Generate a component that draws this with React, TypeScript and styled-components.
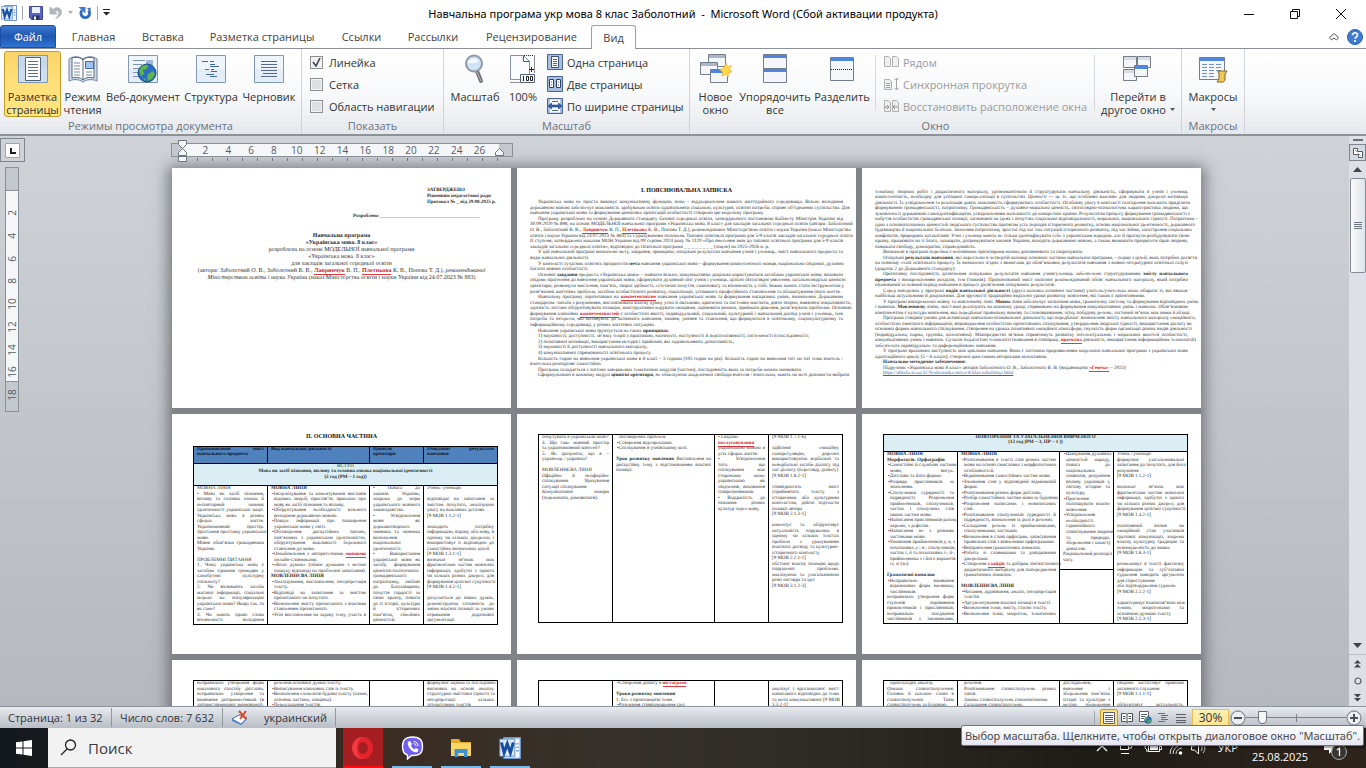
import React from "react";
import styled, { createGlobalStyle, css } from "styled-components";

const GlobalStyle = createGlobalStyle`
  * { box-sizing: border-box; }
  html, body { margin: 0; padding: 0; }
  body { font-family: "Open Sans", "Noto Sans", sans-serif; font-size: 11px; color: #333; }
  button, input { font: inherit; color: inherit; margin: 0; padding: 0; border: 0; background: none; }
  button { white-space: nowrap; }
  svg { display: block; flex: none; }
`;

/* ---------- shell ---------- */

const Shell = styled.div`
  position: relative;
  display: flex;
  flex-direction: column;
  height: 100vh;
  overflow: hidden;
  background: #fff;
`;

const TitleBar = styled.header`
  display: grid;
  grid-template-columns: 1fr auto 1fr;
  align-items: center;
  height: 25px;
  flex: none;
`;

const QuickAccess = styled.div`
  display: flex;
  align-items: center;
  height: 22px;
  padding-left: 1px;
  gap: 5px;
`;

const IconButton = styled.button`
  display: flex;
  align-items: center;
  justify-content: center;
`;

const ThinRule = styled.span`
  width: 1px;
  height: 14px;
  background: #a5a9ae;
`;

const WindowTitle = styled.h1`
  margin: 2px 0 0;
  font-family: "Noto Sans", sans-serif;
  font-size: 11px;
  line-height: 20px;
  font-weight: 400;
  color: #000;
  white-space: pre;
`;

const WindowButtons = styled.div`
  display: flex;
  justify-content: flex-end;
  padding: 3px 2px 0 0;
`;

const WindowButton = styled(IconButton)`
  width: 46px;
  height: 22px;
`;

const TabRow = styled.nav`
  display: flex;
  height: 24px;
  flex: none;
  border-bottom: 1px solid #8b9097;
`;

const Tab = styled.button<{ $w: number; $kind?: "file" | "active" }>`
  width: ${(p) => p.$w}px;
  height: 23px;
  line-height: 22px;
  text-align: center;
  color: #444;
  ${(p) =>
    p.$kind === "file" &&
    css`
      color: #fff;
      border: 1px solid #1b4fa3;
      border-radius: 3px 3px 0 0;
      background: linear-gradient(#3b78cf, #1f56b1 50%, #2f74d4);
    `}
  ${(p) =>
    p.$kind === "active" &&
    css`
      height: 24px;
      border: 1px solid #9a9fa6;
      border-bottom: 0;
      border-radius: 3px 3px 0 0;
      background: #fff;
    `}
`;

const TabTools = styled.div`
  display: flex;
  align-items: center;
  gap: 8px;
  margin-left: auto;
  padding-right: 3px;
`;

/* ---------- ribbon ---------- */

const Ribbon = styled.section`
  display: flex;
  height: 87px;
  flex: none;
  background: linear-gradient(#fff, #f7f8f9 55%, #e5e8ec);
  border-bottom: 2px solid #8d9298;
`;

const Group = styled.div<{ $w: number }>`
  display: flex;
  flex-direction: column;
  width: ${(p) => p.$w}px;
  border-right: 1px solid #d0d4d9;
`;

const GroupBody = styled.div<{ $pad?: number }>`
  display: flex;
  height: 69px;
  padding: 2px 0 0 ${(p) => p.$pad ?? 4}px;
`;

const GroupTitle = styled.div`
  line-height: 16px;
  text-align: center;
  color: #6b717b;
`;

const BigButton = styled.button<{ $w: number; $on?: boolean }>`
  display: flex;
  flex-direction: column;
  align-items: center;
  width: ${(p) => p.$w}px;
  height: 66px;
  flex: none;
  border-radius: 3px;
  line-height: 13px;
  border: 1px solid ${(p) => (p.$on ? "#c29b29" : "transparent")};
  ${(p) => p.$on && css`background: linear-gradient(#fbd469, #ffdf7a 50%, #ffe680);`}
`;

const BigIcon = styled.span`
  display: flex;
  align-items: center;
  justify-content: center;
  width: 32px;
  height: 34px;
  margin-bottom: 4px;
`;

const WithCaret = styled.span`
  display: flex;
  align-items: center;
  gap: 4px;
`;

const CaretBelow = styled.span`
  padding-top: 5px;
`;

const Stack = styled.div<{ $ml?: number }>`
  display: flex;
  flex-direction: column;
  margin-left: ${(p) => p.$ml ?? 0}px;
`;

const SmallRow = styled.button<{ $off?: boolean }>`
  display: flex;
  align-items: center;
  gap: 4px;
  height: 22px;
  color: ${(p) => (p.$off ? "#9b9b9b" : "inherit")};
`;

const CheckRow = styled.label`
  display: flex;
  align-items: center;
  gap: 6px;
  height: 22px;
  white-space: nowrap;
`;

const Check = styled.input`
  appearance: none;
  width: 13px;
  height: 13px;
  border: 1px solid #8e8f8f;
  background: #dcdedf;
  box-shadow: inset 0 0 0 1px #f4f4f4;
  &:checked {
    background: #f0f0f0 url("data:image/svg+xml,%3Csvg xmlns='http://www.w3.org/2000/svg' width='11' height='11'%3E%3Cpath d='M2 5l3 4 4-8' fill='none' stroke='%23404552' stroke-width='1.6'/%3E%3C/svg%3E");
  }
`;

const Divider = styled.span<{ $end?: boolean }>`
  width: 1px;
  height: 56px;
  margin: 4px 0 0 ${(p) => (p.$end ? "auto" : "4px")};
  background: #d6d9dd;
`;

/* ---------- workspace ---------- */

const Workspace = styled.main`
  display: flex;
  flex: 1;
  min-height: 0;
  overflow: hidden;
  background: linear-gradient(#cfd3d8, #b5b9be);
`;

const LeftRail = styled.div`
  width: 24px;
  flex: none;
  padding-top: 2px;
`;

const TabStop = styled.button`
  display: flex;
  align-items: center;
  justify-content: center;
  width: 25px;
  height: 24px;
  margin-bottom: 5px;
  border: 1px solid #7f858d;
  background: #cfd3d8;
`;

const RulerBand = styled.div<{ $vertical?: boolean }>`
  display: flex;
  flex-direction: ${(p) => (p.$vertical ? "column" : "row")};
  border: 1px solid #8a9098;
  background: #c3c8cf;
  color: #555b64;
  ${(p) =>
    p.$vertical
      ? css`width: 14px; height: 245px; margin-left: 5px;`
      : css`width: 342px; height: 14px; margin-left: -1px;`}
`;

const RulerWhite = styled.div<{ $vertical?: boolean }>`
  background: #f5f6f8;
  ${(p) =>
    p.$vertical
      ? css`margin-top: 22px; height: 192px; padding-top: 11px; border: solid #8a9098; border-width: 1px 0; writing-mode: vertical-rl;`
      : css`margin-left: 10px; width: 317px; height: 12px; padding-left: 12px;`}
`;

const RulerNumbers = styled.div<{ $vertical?: boolean }>`
  display: flex;
  ${(p) =>
    p.$vertical
      ? css`flex-direction: row; height: 205px; width: 12px;`
      : css`width: 297px; height: 12px;`}
`;

const RulerNumber = styled.span<{ $vertical?: boolean }>`
  flex: 1;
  font-size: 10px;
  line-height: 12px;
  text-align: center;
  ${(p) => p.$vertical && css`writing-mode: vertical-rl; transform: rotate(180deg);`}
`;

const Ticks = styled.div`
  width: 317px;
  height: 3px;
  margin: 1px 0 0 11px;
  background: repeating-linear-gradient(90deg, transparent 0 14px, #6f757d 14px 15px);
`;

const Canvas = styled.div`
  display: flex;
  flex: 1;
  justify-content: center;
  min-width: 0;
`;

const Sheets = styled.div`
  flex: none;
`;

const RulerRow = styled.div`
  position: relative;
  height: 32px;
  padding-top: 7px;
`;

const Marker = styled.span<{ $end?: boolean }>`
  position: absolute;
  top: ${(p) => (p.$end ? 12 : 4)}px;
  left: ${(p) => (p.$end ? 323 : 6)}px;
`;

const PageGrid = styled.div`
  display: grid;
  grid-template-columns: repeat(3, 339px);
  grid-auto-rows: 240px;
  gap: 6px;
  background: #808387;
  box-shadow: 0 2px 14px 4px rgba(60, 64, 70, 0.6);
`;

const Page = styled.article<{ $top: number; $side?: number }>`
  padding: ${(p) => p.$top}px ${(p) => p.$side ?? 21}px 0;
  background: #fff;
  overflow: hidden;
  font-family: "Liberation Serif", serif;
  font-size: 5px;
  line-height: 6px;
  color: #2e2e2e;
  text-rendering: geometricPrecision;
`;

const PageTitle = styled.h2`
  margin: 0 0 6px;
  font-size: 6px;
  line-height: 6px;
  font-weight: 700;
  text-align: center;
  color: #111;
`;

const Lines = styled.div<{ $h: number; $rows: number }>`
  display: grid;
  height: ${(p) => p.$h}px;
  grid-template-columns: minmax(0, 1fr);
  grid-template-rows: repeat(${(p) => p.$rows}, 1fr);
`;

const indents: Record<string, number> = { ">": 8, "-": 3, "•": 1 };

const Line = styled.div<{ $align: "center" | "left" | "justify"; $indent?: string }>`
  min-height: 0;
  height: 5px;
  line-height: 5px;
  white-space: nowrap;
  text-align: ${(p) => p.$align};
  text-align-last: ${(p) => p.$align};
  padding-left: ${(p) => indents[p.$indent ?? ""] ?? 0}px;
`;

const Misspelt = styled.span`
  color: #d0191f;
  font-weight: 700;
  border-bottom: 1px solid #e2383e;
`;

const DocLink = styled.a`
  color: #2b66b1;
`;

const DocTable = styled.table`
  width: 304px;
  table-layout: fixed;
  border-collapse: collapse;
  td, th {
    padding: 0 3px;
    border: 1px solid #000;
    vertical-align: top;
    font-weight: 400;
  }
`;

const HeadCell = styled.th`
  background: #4f81bd;
  color: #0c1626;
`;

const BandCell = styled.td`
  background: #daeef3;
`;

const Approval = styled.div`
  width: 66px;
  margin-left: auto;
  margin-right: -3px;
  white-space: nowrap;
  b { display: block; }
`;

const Author = styled.div`
  margin: 8px 0 13px 160px;
  white-space: nowrap;
`;

const CoverLine = styled.p<{ $strong?: boolean }>`
  margin: 0;
  text-align: center;
  white-space: nowrap;
  font-size: 6px;
  line-height: 7px;
  font-weight: ${(p) => (p.$strong ? 700 : 400)};
`;

const ScrollRail = styled.div`
  display: flex;
  flex-direction: column;
  align-items: center;
  width: 17px;
  flex: none;
  padding-top: 3px;
  background: #dde1e7;
`;

const SplitHandle = styled.span`
  width: 10px;
  height: 2px;
  margin-bottom: 3px;
  background: #6b7078;
`;

const RailBox = styled(IconButton)`
  width: 17px;
  height: 17px;
  border: 1px solid #7f858d;
  background: #d5d9df;
`;

const RailButton = styled(IconButton)`
  width: 17px;
  height: 17px;
`;

const Thumb = styled.div`
  display: flex;
  align-items: center;
  justify-content: center;
  width: 16px;
  height: 95px;
  margin-bottom: auto;
  border: 1px solid #858b94;
  border-radius: 2px;
  background: linear-gradient(90deg, #f8f9fa, #e0e4e9);
`;

const RailFoot = styled.div`
  width: 17px;
  border-top: 1px solid #b9bec5;
`;

/* ---------- status bar ---------- */

const StatusBar = styled.footer`
  display: flex;
  align-items: center;
  height: 22px;
  flex: none;
  border-top: 1px solid #8e949b;
  background: linear-gradient(#e8ebee, #cfd3d9 50%, #b9bfc7);
  color: #30353c;
`;

const StatusItem = styled.button<{ $w: number }>`
  display: flex;
  align-items: center;
  justify-content: space-between;
  width: ${(p) => p.$w}px;
  height: 19px;
  padding: 0 8px;
  border-right: 1px solid #9298a0;
`;

const StatusRight = styled.div`
  display: flex;
  align-items: center;
  height: 20px;
  margin-left: auto;
  padding-right: 4px;
`;

const ViewButton = styled(IconButton)<{ $on?: boolean }>`
  width: 18px;
  height: 18px;
  margin-left: ${(p) => (p.$on ? 5 : 0)}px;
  border: 1px solid ${(p) => (p.$on ? "#c29b29" : "transparent")};
  border-radius: 2px;
  background: ${(p) => (p.$on ? "#ffe07a" : "none")};
`;

const ZoomLevel = styled.button`
  width: 37px;
  height: 18px;
  margin: 0 1px 0 2px;
  font-size: 12px;
  line-height: 16px;
  border: 1px solid #e8c050;
  background: linear-gradient(#fdf0b4, #fbe392);
`;

const ZoomSlider = styled.input`
  appearance: none;
  width: 100px;
  height: 16px;
  background: linear-gradient(#7c828b, #7c828b) center / 100% 1px no-repeat,
    linear-gradient(#7c828b, #7c828b) center / 1px 8px no-repeat;
  &::-webkit-slider-thumb {
    appearance: none;
    width: 9px;
    height: 13px;
    border: 1px solid #6d737b;
    border-radius: 1px 1px 5px 5px;
    background: #f2f4f6;
  }
`;

/* ---------- taskbar ---------- */

const Taskbar = styled.footer`
  display: flex;
  align-items: center;
  height: 40px;
  flex: none;
  background: linear-gradient(90deg, #14191d, #1d1e1f 14%, #3a2d22 28%, #35302a 45%, #2e2a26 60%, #1f1c18 80%, #2f241c);
  color: #fff;
`;

const StartButton = styled(IconButton)`
  width: 48px;
  height: 40px;
`;

const SearchBox = styled.label`
  display: flex;
  align-items: center;
  gap: 11px;
  width: 288px;
  height: 40px;
  padding-left: 12px;
  margin-right: 7px;
  border: 1px solid #a7a7a7;
  border-width: 0 0 1px;
  background: #f2f2f2;
`;

const SearchInput = styled.input`
  width: 200px;
  font-size: 15px;
  line-height: 20px;
  outline: 0;
  &::placeholder { color: #3a3a3a; opacity: 1; }
`;

const AppButton = styled(IconButton)<{ $bg?: string; $line: string }>`
  width: 40px;
  height: 40px;
  margin-right: 9px;
  padding-top: 2px;
  background: ${(p) => p.$bg ?? "none"};
  border-bottom: 2px solid ${(p) => p.$line};
`;

const Tray = styled.div`
  display: flex;
  align-items: center;
  gap: 6px;
  height: 40px;
  margin-left: auto;
  padding-right: 18px;
`;

const TrayGlyph = styled.span`
  margin-right: 5px;
`;

const TrayText = styled.span`
  font-size: 11px;
  line-height: 16px;
  margin: 0 5px 0 4px;
`;

const TrayDate = styled(TrayText)`
  align-self: flex-end;
  margin: 0 8px 3px 3px;
`;

const Tooltip = styled.div`
  position: absolute;
  right: 2px;
  bottom: 22px;
  height: 21px;
  padding: 0 3px;
  font-family: "Noto Sans", sans-serif;
  font-size: 11px;
  line-height: 19px;
  white-space: nowrap;
  color: #4c4c4c;
  border: 1px solid #767676;
  border-radius: 2px;
  background: linear-gradient(#fff, #e4e5f0);
  box-shadow: 2px 2px 2px rgba(0, 0, 0, 0.4);
`;

/* ---------- icons ---------- */

const Svg = ({ w, h = w, children }: { w: number; h?: number; children: React.ReactNode }) => (
  <svg width={w} height={h} viewBox={`0 0 ${w} ${h}`} fill="none" aria-hidden="true">{children}</svg>
);

const WordIcon = ({ s = 16 }: { s?: number }) => (
  <svg width={s} height={s} viewBox="0 0 16 16" fill="none" aria-hidden="true">
    <path d="M3.5.5h12v15h-12z" fill="#f3f7fc" stroke="#6d93c8" />
    <path d="M12.500 5h2M12.500 7.500h2M12.500 10h2" stroke="#7b9ccc" />
    <path d="M.5 1.500h11v12.500H.5z" fill="#dbe9f8" stroke="#4a7cc0" strokeWidth=".6" />
    <path d="M1.800 4l1.900 7.500L6 5l2.300 6.500L10.400 4" stroke="#174f9e" strokeWidth="2.200" />
  </svg>
);

const SaveIcon = () => (
  <Svg w={16}><path d="M1.5 1.5h13v13h-11l-2-2z" fill="#5a66c4" stroke="#3c469c" /><path d="M4 2h8v6H4z" fill="#eef0fb" /><path d="M4.500 10.500h7v4h-7z" fill="#2d3260" /><path d="M6 11.500h2v3H6z" fill="#fff" /></Svg>
);
const UndoIcon = () => (
  <Svg w={14} h={16}><path d="M1 2v7h7L5.800 6.600C8 5 10.300 6 9.600 9c-.5 1.800-1.600 3-3 4.500C10.500 12 12.500 10 12.500 7c0-4-4.500-6-8.500-2.600z" fill="#b5b8bd" stroke="#9b9fa5" strokeWidth=".6" /></Svg>
);
const RedoIcon = () => (
  <Svg w={14} h={14}><path d="M4 4.500A4.300 4.300 0 1 0 10.500 4.500" stroke="#2f6bc4" strokeWidth="3" /><path d="M.5 1h7v6.500z" fill="#3a78d2" /><path d="M9 2.500l3.500-1v4z" fill="#2f6bc4" /></Svg>
);
const Caret = ({ c = "#555" }: { c?: string }) => <Svg w={5} h={3}><path d="M0 0h5L2.500 3z" fill={c} /></Svg>;

const DocFrame = ({ children, fill = "#f0f5fb" }: { children: React.ReactNode; fill?: string }) => (
  <Svg w={30} h={28}>
    <path d="M.5.5h29v27H.5z" fill={fill} stroke="#7f98b6" />
    <path d="M1 14h28v13H1z" fill="#d8e4f2" opacity=".5" />
    {children}
  </Svg>
);
const LayoutIcon = () => (
  <DocFrame fill="#c7d8ec"><path d="M7.500 2.500h15v23h-15z" fill="#fff" stroke="#50627c" /><path d="M10 6.500h10M10 9.500h10M10 12.500h10M10 15.500h10M10 18.500h10M10 21.500h10" stroke="#5f6f8c" /></DocFrame>
);
const ReadIcon = () => (
  <Svg w={30} h={28}><path d="M1 4c4-3 10-3 14 0 4-3 10-3 14 0v22c-4-2-10-2-14 1-4-3-10-3-14-1z" fill="#cfdcec" stroke="#6b7f9b" /><path d="M4 3c4-1 8-1 11 2 3-3 7-3 11-2v20c-4-1-8-1-11 2-3-3-7-3-11-2zM15 5v20" fill="#fff" stroke="#56677f" /><path d="M6 8h6M6 11h6M6 14h6M6 17h6M6 20h6M18 17h6M18 20h6" stroke="#7787a0" /><path d="M17.500 6.500h8v7h-8z" fill="#9cc4ec" stroke="#3e6ba5" /></Svg>
);
const Globe = ({ x, y, r }: { x: number; y: number; r: number }) => (
  <g transform={`translate(${x} ${y}) scale(${r / 9})`}><circle r="9" fill="#2b6cc4" stroke="#174a8c" /><path d="M-8-2c2-5 6-7 9-6l-1 4-4 1 1 4-3 2zM1 1l5-3 2 3-3 5-4 2-1-4zM-4 5l3 1-1 2z" fill="#5fb548" /></g>
);
const WebIcon = () => (
  <DocFrame><path d="M5 5.500h12M5 9.500h9M5 13.500h6M5 17.500h5M5 21.500h6" stroke="#7b93b2" /><path d="M18 5h7v6h-7z" fill="#9fb9dc" /><Globe x={19} y={18} r={9} /></DocFrame>
);
const OutlineIcon = () => (
  <DocFrame><path d="M6 6.500h6M14 9.500h5M14 11.500h9M9 14.500h4M15 16.500h6M10 19.500h8M14 21.500h7" stroke="#42699c" /><path d="M14 6.500h4M15 14.500h3" stroke="#42699c" /></DocFrame>
);
const DraftIcon = () => (
  <DocFrame><path d="M7 6.500h16M7 9.500h16M7 12.500h16M7 15.500h16M9 18.500h14M7 21.500h16" stroke="#566a8a" /></DocFrame>
);
const ZoomIcon = () => (
  <Svg w={22} h={30}><path d="M13 17l4 10" stroke="#6d6f73" strokeWidth="4" strokeLinecap="round" /><path d="M13 18l4 9" stroke="#b9bcc1" strokeLinecap="round" /><circle cx="10" cy="9.500" r="8" fill="#cfe3f6" stroke="#8d99a8" strokeWidth="2" /><path d="M4 9c1-5 8-6 11-2-4 3-7 2-11 2z" fill="#f4faff" /></Svg>
);
const HundredIcon = () => (
  <Svg w={28} h={30}><path d="M1.500 1.500h13l6 6v18h-19z" fill="#fbfcfe" stroke="#8494a8" /><path d="M14.500 1.500v6h6" stroke="#4f6078" /><path d="M25.500 1.500v18M15 1.500h10M1.500 28.500h10" stroke="#222" strokeDasharray="1 1" /><path d="M20 15.500h5M22.500 13v5" stroke="#222" /><path d="M11.500 20.500h14v8h-14z" fill="#f4f6f9" stroke="#56657c" /><path d="M14.500 22v5M17.500 22.500h2v4h-2zM21.500 22.500h2v4h-2z" stroke="#222" /></Svg>
);
const Tile = ({ children }: { children: React.ReactNode }) => (
  <Svg w={16}><path d="M.5.5h15v15H.5z" fill="#a8c0e0" stroke="#4a6590" />{children}</Svg>
);
const OnePage = () => <Tile><path d="M4.500 2.500h7v11h-7z" fill="#fff" stroke="#3e5274" /><path d="M6 5.500h4M6 7.500h4M6 9.500h4M6 11.500h4" stroke="#4a6590" /></Tile>;
const TwoPages = () => <Tile><path d="M2.500 3.500h4v8h-4zM9.500 3.500h4v8h-4z" fill="#fff" stroke="#2c426a" /><path d="M4 6h1M4 9h1M11 6h1M11 9h1" stroke="#4a6590" /></Tile>;
const PageWidth = () => <Tile><path d="M3 1.500h10v13H3z" fill="#fff" /><path d="M5 3.500h6M5 12.500h6" stroke="#4a6590" /><path d="M1 8l3.500-3v2h7V5L15 8l-3.500 3V9h-7v2z" fill="#2f62b5" stroke="#173d7c" strokeWidth=".6" /></Tile>;

const Win = ({ x, y, w, h, c }: { x: number; y: number; w: number; h: number; c: string }) => (
  <g><path d={`M${x + 0.5} ${y + 0.5}h${w}v${h}h-${w}z`} fill="#f4f6f9" stroke="#737d8b" /><path d={`M${x + 1} ${y + 1}h${w - 1}v3h-${w - 1}z`} fill={c} /></g>
);
const NewWindow = () => (
  <Svg w={32} h={30}><Win x={8} y={0} w={17} h={12} c="#aeb4c8" /><Win x={0} y={8} w={17} h={12} c="#aeb4c8" /><Win x={10} y={15} w={17} h={13} c="#4f86e0" /><path d="M26 9l1.500 4 4-1.500-2 3.500 3 3-4 .5L28 23l-2.500-3-3.500 2 .5-4-3-2.500 4-1z" fill="#ffd84a" stroke="#e0a320" strokeWidth=".6" /></Svg>
);
const ArrangeAll = () => <Svg w={26} h={30}><Win x={1} y={0} w={23} h={14} c="#4f86e0" /><Win x={1} y={14} w={23} h={14} c="#4f86e0" /></Svg>;
const SplitIcon = () => <Svg w={26} h={26}><Win x={1} y={1} w={23} h={23} c="#4f86e0" /><path d="M2 13.500h22" stroke="#222" strokeDasharray="1 1" /></Svg>;
const SwitchIcon = () => <Svg w={32} h={28}><Win x={1} y={1} w={13} h={11} c="#d9dce0" /><Win x={15} y={1} w={13} h={11} c="#d9dce0" /><Win x={1} y={14} w={13} h={11} c="#d9dce0" /><Win x={12} y={10} w={13} h={11} c="#4f86e0" /></Svg>;
const MacroIcon = () => (
  <Svg w={30} h={28}><Win x={1} y={2} w={25} h={22} c="#4f86e0" /><path d="M4 9.500h20M4 12.500h20M4 15.500h20M4 18.500h14M4 21.500h14" stroke="#6e90c8" strokeDasharray="5 2" /><path d="M20 16h9l-2 3v5c0 2-1 3-3 3h-5l2-3v-5z" fill="#f0c75e" stroke="#8a6518" /></Svg>
);
const PairIcon = () => <Svg w={16} h={14}><path d="M1.500 1.500h4l2 2v8h-6zM9.500 1.500h4l2 2v8h-6z" fill="#f0f0f0" stroke="#b0b0b0" /></Svg>;
const SyncIcon = () => <Svg w={16} h={14}><path d="M1.500 2.500h5l2 2v8h-7z" fill="#eee" stroke="#b0b0b0" /><path d="M3 6.500h4M3 8.500h4M3 10.500h4M13.500 1v12M11.500 3l2-2 2 2M11.500 11l2 2 2-2" stroke="#a3a3a3" /></Svg>;
const ResetIcon = () => <Svg w={16} h={14}><path d="M1.500 1.500h4l2 2v9h-6zM9.500 1.500h4l2 2v9h-6z" fill="#eee" stroke="#b0b0b0" /><path d="M1 8h5M4 6l2 2-2 2M15 8h-5M12 6l-2 2 2 2" stroke="#909090" /></Svg>;

/* ---------- document text ---------- */

/* Line marks: "|" left aligned, "^" centred, ">" first-line indent, "-" hanging indent. */
const inline = (s: string) =>
  s.split(/(\*[^*]+\*|~[^~]+~|_{2}[^_]+_{2})/).map((t, i) =>
    t.startsWith("*") ? <b key={i}>{t.slice(1, -1)}</b>
      : t.startsWith("~") ? <Misspelt key={i}>{t.slice(1, -1)}</Misspelt>
      : t.startsWith("__") && t.length > 4 && t[2] !== "_" ? <i key={i}>{t.slice(2, -2)}</i>
      : t
  );

const TextBlock = ({ text, h, rows }: { text: string; h: number; rows?: number }) => {
  const lines = text.split("\n");
  return (
    <Lines $h={h} $rows={rows ?? lines.length}>
      {lines.map((l, i) => {
        const marks = l.match(/^[|^>-]*/)![0];
        const align = marks.includes("^") ? "center" : marks.includes("|") ? "left" : "justify";
        let body = l.slice(marks.length);
        let indent = marks.includes(">") ? ">" : marks.includes("-") ? "-" : "";
        if (indent === "-" && body.startsWith("• ")) {
          indent = "•";
          body = "•" + body.slice(2);
        }
        return <Line key={i} $align={align} $indent={indent}>{inline(body)}</Line>;
      })}
    </Lines>
  );
};

const INTRO = `>Українська мова не просто виконує комунікативну функцію, вона – віддзеркалення нашого життєдайного середовища. Вільне володіння
державною мовою забезпечує можливість здобувачам освіти задовольняти соціальні, культурні, освітні потреби, сприяє об’єднанню суспільства. Для
|навчання української мови та формування ціннісних орієнтацій особистості створено цю модельну програму.
>Програму розроблено на основі Державного стандарту базової середньої освіти, затвердженого постановою Кабінету Міністрів України від
30.09.2020 № 898, на основі МОДЕЛЬНОЇ навчальної програми «Українська мова. 8 клас» для закладів загальної середньої освіти (автори: Заболотний
О. В., Заболотний В. В., ~Лавринчук~ В. П., ~Плетньова~ К. В., Попова Т. Д.), рекомендованої Міністерством освіти і науки України (наказ Міністерства
освіти і науки України від 24.07.2023 № 883) та з урахуванням положень Типової освітньої програми для 5-9 класів закладів загальної середньої освіти
ІІ ступеня, затвердженої наказом МОН України від 09 серпня 2024 року № 1120 «Про внесення змін до типової освітньої програми для 5-9 класів
|закладів загальної середньої освіти», відповідно до Освітньої програми _ _ _ _ _ _ _ _ (ліцею) на 2025-2026 н. р.
>У цій навчальній програмі визначено мету, завдання, принципи, очікувані результати навчання учнів і учениць, зміст навчального предмета та
|види навчальної діяльності.
>У контексті сучасних освітніх пріоритетів *мета* навчання української мови – формування компетентного мовця, національно свідомої, духовно
|багатої мовної особистості.
>Основні *завдання* предмета «Українська мова» – навчити вільно, комунікативно доцільно користуватися засобами української мови; виховати
свідоме прагнення до вивчення української мови; сформувати духовний світ учнів і учениць, цілісні світоглядні уявлення, загальнолюдські ціннісні
орієнтири; розвинути мислення, пам’ять, творчі здібності, естетичні почуття, самоповагу та впевненість у собі. Інших мають стати інструментом у
|розв’язанні життєвих проблем, засобом особистісного розвитку, соціалізації, успішного професійного становлення та облаштування свого життя.
>Навчальну програму зорієнтовано на ~компетентнісне~ навчання української мови та формування наскрізних умінь, визначених Державним
стандартом: читати з розумінням, висловлювати власну думку усно й письмово, критично та системно мислити, діяти творчо, виявляти ініціативність,
здатність логічно обґрунтовувати позицію, конструктивно керувати емоціями, оцінювати ризики, приймати рішення, розв’язувати проблеми. Основою
формування ключових ~компетентностей~ є особистісні якості, індивідуальний, соціальний, культурний і навчальний досвід учнів і учениць, їхні
потреби та інтереси, які мотивують до активного навчання, знання, уміння та ставлення, що формуються в освітньому, соціокультурному та
|інформаційному середовищі, у різних життєвих ситуаціях.
|>Навчання української мови ґрунтується на таких *принципах*:
|>1) науковості, доступності, зв’язку теорії з практикою, наочності, наступності й перспективності, системності й послідовності;
|>2) позитивної мотивації, використання методів і прийомів, які задовольняють допитливість;
|>3) науковості й доступності навчального матеріалу;
|>4) комунікативної спрямованості освітнього процесу.
>Кількість годин на вивчення української мови в 8 класі – 3 години (105 годин на рік). Кількість годин на вивчення тієї чи тієї теми вчитель /
|вчителька розподіляє самостійно.
|>Програма складається з логічно завершених тематичних модулів (частин), послідовність яких за потреби можна змінювати.
>Сформульовані в кожному модулі *ціннісні орієнтири*, не обмежуючи академічної свободи вчителя / вчительки, мають на меті допомогти вибрати`;

const INTRO2 = `тематику творчих робіт і дидактичного матеріалу, урізноманітнити й структурувати навчальну діяльність, сформувати в учнів і учениць
компетентність, необхідну для успішної самореалізації в суспільстві. Цінності — це те, що особливо важливе для людини, джерело мотивації
діяльності. Їх усвідомлення та реалізація дають можливість сформуватись особистості. Особливу увагу в контексті сьогодення належить приділити
формуванню громадянськості, патріотизму. Громадянськість – духовно-моральна цінність, світоглядно-психологічна характеристика людини, що
зумовлена її державною самоідентифікацією, усвідомленням належності до конкретної країни. Результатом процесу формування громадянськості є
набуття особистістю громадянської позиції, заснованої на ідеях і почуттях соціальної відповідальності, моральної, національної гідності. Патріотизм –
одна з основоположних цінностей людського суспільства протягом усіх періодів історичного розвитку, основа національної ідентичності, державного
будівництва й національної безпеки. Значення патріотизму зростає під час тих ситуацій історичного розвитку, під час війни, загострення соціальних
конфліктів, природних катаклізмів. Учні і учениці мають не тільки ідентифікувати себе з українським народом, але й прагнути розбудовувати свою
країну, працювати на її благо, захищати, дотримуватися законів України, володіти державною мовою, а також визнавати пріоритети прав людини,
|поважати свободу, демократію, справедливість.
|>Визначені в програмі переліки є неповними орієнтирами можна доповнювати та скорочувати.
>Очікувані *результати навчання*, які окреслено в четвертій колонці основної частини навчальної програми, – перші з цілей, яких потрібно досягти
на певному етапі освітнього процесу. Їх визначено згідно з вимогами до обов’язкових результатів навчання з мовно-літературної освітньої галузі
|(додаток 2 до Державного стандарту).
>Орієнтовну послідовність досягнення очікуваних результатів навчання учнів/учениць забезпечено структуруванням *змісту навчального*
*предмета* з виокремленням розділів, тем (тижнів). Пропонований зміст охоплює рекомендований обсяг навчального матеріалу, який потрібно
|опанований за певний період навчання в процесі досягнення очікуваних результатів.
>Серед наведених у програмі *видів навчальної діяльності* (друга колонка основної частини) учитель/учителька може обирати ті, які вважає
|найбільш актуальними й доцільними. Для зручності традиційно виділено уроки розвитку мовлення, які також є орієнтовними.
>У програмі виокремлено мовну та мовленнєву лінії. *Мовна* лінія забезпечує засвоєння мови, граматичну систему та формування відповідних умінь
і навичок. *Мовленнєву* лінію, зміст якої реалізують на кожному уроці, спрямовано на формування комунікативних умінь і навичок. Обов’язковим
|компонентом є культура мовлення, яка передбачає правильну вимову та слововживання, чітку побудову речень, логічний зв’язок між ними й абзаці.
>Програма створює умови для активізації навчально-пізнавальної діяльності, що передбачає: визначення змісту навчального матеріалу емоційного,
особистісно ємнісного інформацією, впровадження особистісно орієнтованих спілкування, утвердження людської гідності, використання діалогу як
основної форми навчального спілкування, створення на уроках позитивної емоційної атмосфери, гнучкість форм організації різних видів діяльності
(індивідуальна, парна, групова, колективна). Міжпредметні зв’язки сприятимуть розвитку інтелектуальних і моральних якостей особистості,
комунікативних умінь і навичок. Сучасні педагогічні технології (навчання в співпраці, ~проєктна~ діяльність, використання інформаційних технологій)
|забезпечать індивідуальне та диференційоване навчання.
>У програмі враховано наступність між циклами навчання. Вона є логічним продовженням модельної навчальної програми з української мови
|адаптаційного циклу (5 – 6 класи), створеної цим самим авторським колективом.
|>*Навчально-методичне забезпечення:*
|>Підручник «Українська мова 8 клас» авторів Заболотного О. В., Заболотного В. В. (видавництво ~«Генеза»~ – 2025)`;

type Cells = string[];

const P4: Cells = [
`|МОВНА ЛІНІЯ
•  Мова як засіб пізнання,
впливу та головна ознака й
неповторний чинник
ідентичності української нації.
Українська мова в різних
сферах життя.
Україномовний простір.
Зростання престижу української
|мови.
Мовні обов’язки громадянина
|України.

|ПРОБЛЕМНІ ПИТАННЯ
1. Чому українська мова є
засобом єднання громадян у
самобутню культурну
|спільноту?
2. Чи впливають засоби
масової інформації, соціальні
мережі на популяризацію
української мови? Якщо так, то
|як саме?
3. Чи мають право слова
впевненості володіння`,
`|*МОВНА ЛІНІЯ*
-• Інсценізування та коментування висловів
-відомих людей, прислів’їв, приказок про
|-мову як засіб пізнання та впливу.
-• Обґрунтування необхідності вільного
|-володіння державною мовою.
-• Пошук інформації про поширення
|-української мови у світі.
-• Обговорення дискусійних питань,
-пов’язаних з українською ідентичністю,
-обґрунтування важливості бережного
|-ставлення до мови.
-• Ознайомлення з авторитетними ~мовними~
|-онлайн-словниками.
-• «Коло думок» (обмін думками з метою
|-пошуку відповіді на проблемні запитання).
|*МОВЛЕННЄВА ЛІНІЯ*
-• Аналізування, висловлення, інтерпретація
|-тексту.
-• Відповіді на запитання за змістом
|-прочитаного чи почутого.
-• Визначення змісту прочитаного з власним
|-ставленням прочитаного.
-• Усні висловлення на задану тему, участь в`,
`•  Повага до
законів України,
зокрема до норм
українського мовного
|законодавства.
•  Усвідомлення
мови як
державотворчого
чинника та чинника
визначення
національної
|ідентичності.
•  Використання
української мови як
засобу формування
ціннісно-політичного
громадянського
патріотизму, любові
до Батьківщини;
почуття гордості за
свою країну, поваги
до її історії, культури
й історичних
пам’яток, сімейних
|цінностей.`,
`|__Учень / учениця:__

відповідає на запитання за
змістом почутого, аналізуючи
|увагу на важливих деталях
|[9 МОВ 1.1.2-1]

знаходить потрібну
інформацію, відому або нову, в
одному чи кількох джерелах і
використовує її відповідно до
|самостійно визначених цілей
|[9 МОВ 1.3.1-1]
визначає зв’язок між
фрагментами частин мовленої
інформації, здобутої з одного
чи кількох різних джерел, для
|формування цілісної сукупності
|[9 МОВ 1.4.2-1]

долучається до інших думок,
демонструючи готовність до
зміни власної позиції за умови
отримання додаткової
|аргументації`,
];

const P5: Cells = [
`|побутувати в українській мові?
4. Що таке мовний простір
|та україномовний контент?
5. Як зрозуміти, що я –
|українець / українка?

|МОВЛЕННЄВА ЛІНІЯ
Офіційне й неофіційне
спілкування. Урахування
|ситуації спілкування.
Комунікативні наміри
|(переконати, домовитися).`,
`|-обговорених проблем.
|-• Створення відеореклами.
|-• Спілкування в учнівському колі.

*Урок розвитку мовлення* Висловлення на
дискусійну тему з відстоюванням власної
|позиції.`,
`|•      Свідоме
|~послуговування~
українською мовою в
|усіх сферах життя.
•  Усвідомлення
того, що
спілкування між
сторонами може
українською як
свідчення, виховання
|співрозмовників.
•  Відкритість до
пізнання різних
|культур через мову.`,
`|[9 МОВ 1.7.1-6]

здійснює емоційну
саморегуляцію, доречно
використовуючи вербальні та
невербальні засоби діалогу під
|час діалогу (перегляду допису)
|[9 МОВ 1.8.2-1]

співвідносить зміст
сприйнятого тексту з
історичним або культурним
контекстом, дійсні підтексти
|позиції автора
|[9 МОВ 2.1.3-1]

коментує та обґрунтовує
актуальність порушених в
одному чи кількох текстах
проблем з урахуванням
власного досвіду та культурно-
|історичного контексту
|[9 МОВ 2.2.1-1]
обстоює власну позицію щодо
порушеної проблеми,
аналізуючи та узагальнюючи
|різні погляди та ідеї
|[9 МОВ 3.1.2-3]`,
];

const P6: Cells = [
`|*МОВНА ЛІНІЯ*
|*Морфологія. Орфографія*
-• Самостійні й службові частини
-мови, вигук.
|-• Дієслово та його форми.
-• Розряди прислівників за
|-значенням.
-• Сполучники сурядності та
-підрядності. Розрізнення
-прийменників, сполучників,
-часток і сполучних слів
|-інших частин мови.
-• Написання прислівників разом,
|-окремо, з дефісом.
-• Написання не з різними
|-частинами мови.
-• Уживання прийменників __у, в__, з
-початкових __у-, в-__, сполучників,
-часток __і, й__ та початкових __і-, й-__,
-прийменника __з__ і його варіантів
|-__із, зі (зо)__.

|*Граматичні помилки*
-• Неправильне вживання
-відмінкових форм іменника,
|-числівників.
неправильне утворення форм
ступенів порівняння
прикметників і прислівників,
неправильне поєднання
числівників з іменниками,`,
`|*МОВНА ЛІНІЯ*
-• Розпізнавання в тексті слів різних частин
-мови на основі смислових і морфологічних
|-особливостей.
|-• Відмінювання самостійних частин мови.
-• Уживання слів у відповідній відмінковій
|-формі.
|-• Розпізнавання різних форм дієслова.
|-• Розбір самостійних частин мови за будовою.
-• Розрізнення написаних і невиписаних
|-слів.
-• Розпізнавання сполучників сурядності й
|-підрядності, визначення їх ролі в реченні.
-• Складання речень із прийменниками,
|-сполучниками, частками.
-• Визначення в слові орфограм, записування
|-правильно слів з вивченими орфограмами.
|-• Виправлення граматичних помилок.
-• Робота зі словниками та довідковими
|-джерелами.
-• Створення ~слайдів~ та добірки лінгвістичного
-дидактичного матеріалу для попередження
|-граматичних помилок.

|*МОВЛЕННЄВА ЛІНІЯ*
-• Читання, аудіювання, аналіз, інтерпретація
|-текстів.
|-• Аргументування власної позиції в тексті.
|-• Визначення теми, змісту, стилю тексту.
-• Визначення теми, мікротем, тематичних`,
`-• Шанування духовних
-цінностей народу,
-повага до
-національних
-символів, розуміння
-впливу українців у
-світову історію та
|-культуру.
-• Прагнення
-поліпшувати власне
|-мовлення.
-• Усвідомлення
-необхідності
-гармонійного
-співіснування людини
-та природи,
-збереження і захисту
|-довкілля.
Раціональний розподіл
|часу.`,
`|__Учень / учениця:__
формулює узагальнювальні
запитання до почутого, для його
|розуміння
|[9 МОВ 1.1.2-1]

визначає зв’язок між
фрагментами частин мовленої
інформації, здобутої з одного
чи кількох різних джерел, для
|формування цілісної сукупності
|[9 МОВ 1.4.2-1]

позитивний вплив на
емоційний стан учасників
групової комунікації, зокрема
власну культурну традицію та
|невимушеність до інших
|[9 МОВ 1.8.3-1]

розмежовує в тексті фактичну
інформацію та суб’єктивні
судження наводить аргументи
|для спростування
|або підтвердження суджень
|[9 МОВ 2.2.2-1]

характеризує взаємозв’язок між
темою, мікротемами та
|основною думкою тексту
|[9 МОВ 2.2.3-1]`,
];

const P7: Cells = [
`неправильне утворення форм
наказового способу дієслова,
неправильне утворення та
вживання дієприкметників (в
|дієприслівникової змінюваної).`,
`|-речення основної думки тексту.
|-• Виписування ключових слів із тексту.
|-• Визначення елементів будови тексту (зачин,
|-основна частина, кінцівка).
|-• Перекладання текстів.`,
``,
`формулює оцінки та послідовно
висновки на основі аналізу
структурно-змістової єдності та
інтерпретації кількох
|літературних текстів`,
];
const P8: Cells = [
``,
`|-• Створення допису в ~інстаграмі~.

|*Уроки розвитку мовлення*
|1. Есе з пропозицією теми.
|-• Розуміння співвідношення ідеї.`,
``,
`
аналізує і вдосконалює зміст
написаного відповідно до теми
та мети комунікативної [9 МОВ
|3.3.2-1]`,
];
const P9: Cells = [
`|-односкладні аналізу.
Ознаки словосполучення.
Головне й залежне слово в
словосполученні. Типи
|словосполучень за будовою.`,
`|-речення.
-Розпізнавання словосполучень різних
|-типів.
|-Заміна словосполучень синонімічними.
|-Складання словосполучень.`,
`дослідження,
вивчення і
збереження пам’яток
історії та культури з
метою збереження`,
`свідомо застосовує прийоми
|активного слухання
|[9 МОВ 1.1.1-1]

обґрунтовує актуальність,`,
];

const headings = [
  "*Пропонований зміст*\n|*навчального предмета*",
  "|*Вид навчальної діяльності*",
  "|*Ціннісні*\n|*орієнтири*",
  "*Очікувані результати*\n|*навчання*",
];

const Cols = () => (
  <colgroup>{[74, 102, 54, 74].map((w, i) => <col key={i} width={w} />)}</colgroup>
);

const SimpleTable = ({ cells }: { cells: Cells }) => (
  <DocTable>
    <Cols />
    <tbody>
      <tr>{cells.map((c, i) => <td key={i}><TextBlock text={c} h={187} rows={34} /></td>)}</tr>
    </tbody>
  </DocTable>
);

/* ---------- app ---------- */

const tabs: [string, number, ("file" | "active")?][] = [
  ["Файл", 56, "file"], ["Главная", 75], ["Вставка", 64], ["Разметка страницы", 134],
  ["Ссылки", 65], ["Рассылки", 78], ["Рецензирование", 119], ["Вид", 45, "active"],
];

export default function App() {
  return (
    <Shell>
      <GlobalStyle />
      <TitleBar>
        <QuickAccess>
          <WordIcon />
          <ThinRule />
          <IconButton aria-label="Сохранить"><SaveIcon /></IconButton>
          <IconButton aria-label="Отменить"><UndoIcon /></IconButton>
          <Caret c="#a8abb0" />
          <IconButton aria-label="Повторить"><RedoIcon /></IconButton>
          <ThinRule />
          <IconButton aria-label="Настройка"><Svg w={7} h={7}><path d="M0 .5h7" stroke="#222" /><path d="M0 3h7L3.500 6.500z" fill="#222" /></Svg></IconButton>
        </QuickAccess>
        <WindowTitle>{"Навчальна програма укр мова 8 клас Заболотний  -  Microsoft Word (Сбой активации продукта)"}</WindowTitle>
        <WindowButtons>
          <WindowButton aria-label="Свернуть"><Svg w={10}><path d="M0 5.500h10" stroke="#111" /></Svg></WindowButton>
          <WindowButton aria-label="Развернуть"><Svg w={10}><path d="M.5 2.500h7v7h-7zM2.500 2.500v-2h7v7h-2" stroke="#111" /></Svg></WindowButton>
          <WindowButton aria-label="Закрыть"><Svg w={10}><path d="M0 0l10 10M10 0L0 10" stroke="#111" /></Svg></WindowButton>
        </WindowButtons>
      </TitleBar>

      <TabRow>
        {tabs.map(([t, w, k]) => <Tab key={t} $w={w} $kind={k}>{t}</Tab>)}
        <TabTools>
          <IconButton aria-label="Свернуть ленту"><Svg w={10} h={8}><path d="M1 4l4-3.500L9 4v1.500L7.500 7 5 5 2.500 7 1 5.500z" stroke="#555" /></Svg></IconButton>
          <IconButton aria-label="Справка">
            <Svg w={16}><circle cx="8" cy="8" r="7.500" fill="#3f7bd0" stroke="#2a5fae" /><path d="M5.500 6.300c.1-3.400 5-3.300 5-.3 0 1.800-2.400 1.900-2.400 3.800M8 11v2" stroke="#fff" strokeWidth="1.700" /></Svg>
          </IconButton>
        </TabTools>
      </TabRow>

      <Ribbon>
        <Group $w={302}>
          <GroupBody>
            <BigButton $w={57} $on><BigIcon><LayoutIcon /></BigIcon>Разметка<br />страницы</BigButton>
            <BigButton $w={43}><BigIcon><ReadIcon /></BigIcon>Режим<br />чтения</BigButton>
            <BigButton $w={78}><BigIcon><WebIcon /></BigIcon>Веб-документ</BigButton>
            <BigButton $w={58}><BigIcon><OutlineIcon /></BigIcon>Структура</BigButton>
            <BigButton $w={58}><BigIcon><DraftIcon /></BigIcon>Черновик</BigButton>
          </GroupBody>
          <GroupTitle>Режимы просмотра документа</GroupTitle>
        </Group>
        <Group $w={142}>
          <GroupBody $pad={8}>
            <Stack>
              <CheckRow><Check type="checkbox" defaultChecked />Линейка</CheckRow>
              <CheckRow><Check type="checkbox" />Сетка</CheckRow>
              <CheckRow><Check type="checkbox" />Область навигации</CheckRow>
            </Stack>
          </GroupBody>
          <GroupTitle>Показать</GroupTitle>
        </Group>
        <Group $w={246}>
          <GroupBody>
            <BigButton $w={54}><BigIcon><ZoomIcon /></BigIcon>Масштаб</BigButton>
            <BigButton $w={42}><BigIcon><HundredIcon /></BigIcon>100%</BigButton>
            <Stack $ml={3}>
              <SmallRow><OnePage />Одна страница</SmallRow>
              <SmallRow><TwoPages />Две страницы</SmallRow>
              <SmallRow><PageWidth />По ширине страницы</SmallRow>
            </Stack>
          </GroupBody>
          <GroupTitle>Масштаб</GroupTitle>
        </Group>
        <Group $w={492}>
          <GroupBody>
            <BigButton $w={43}><BigIcon><NewWindow /></BigIcon>Новое<br />окно</BigButton>
            <BigButton $w={76}><BigIcon><ArrangeAll /></BigIcon>Упорядочить<br />все</BigButton>
            <BigButton $w={58}><BigIcon><SplitIcon /></BigIcon>Разделить</BigButton>
            <Divider />
            <Stack $ml={7}>
              <SmallRow $off><PairIcon />Рядом</SmallRow>
              <SmallRow $off><SyncIcon />Синхронная прокрутка</SmallRow>
              <SmallRow $off><ResetIcon />Восстановить расположение окна</SmallRow>
            </Stack>
            <Divider $end />
            <BigButton $w={86}>
              <BigIcon><SwitchIcon /></BigIcon>Перейти в
              <WithCaret>другое окно <Caret /></WithCaret>
            </BigButton>
          </GroupBody>
          <GroupTitle>Окно</GroupTitle>
        </Group>
        <Group $w={63}>
          <GroupBody $pad={2}>
            <BigButton $w={58}><BigIcon><MacroIcon /></BigIcon>Макросы<CaretBelow><Caret /></CaretBelow></BigButton>
          </GroupBody>
          <GroupTitle>Макросы</GroupTitle>
        </Group>
      </Ribbon>

      <Workspace>
        <LeftRail>
          <TabStop aria-label="Табуляция"><Svg w={15}><path d="M.5.5h14v14H.5z" fill="#fff" stroke="#a0a5ac" /><path d="M6 5v5h5" stroke="#222" strokeWidth="2" /></Svg></TabStop>
          <RulerBand $vertical>
            <RulerWhite $vertical>
              <RulerNumbers $vertical>
                {[2, 4, 6, 8, 10, 12, 14, 16, 18].map((n) => <RulerNumber key={n} $vertical>{n}</RulerNumber>)}
              </RulerNumbers>
            </RulerWhite>
          </RulerBand>
        </LeftRail>
        <Canvas>
          <Sheets>
            <RulerRow>
              <RulerBand>
                <RulerWhite>
                  <RulerNumbers>
                    {[2, 4, 6, 8, 10, 12, 14, 16, 18, 20, 22, 24, 26].map((n) => <RulerNumber key={n}>{n}</RulerNumber>)}
                  </RulerNumbers>
                </RulerWhite>
              </RulerBand>
              <Ticks />
              <Marker><Svg w={9} h={22}><path d="M.5.5h8v4l-4 4-4-4zM4.500 8.500l4 4v3h-8v-3zM.5 16.500h8v5h-8z" fill="#f4f5f7" stroke="#70767e" /></Svg></Marker>
              <Marker $end><Svg w={9} h={8}><path d="M4.500.5l4 4v3h-8v-3z" fill="#f4f5f7" stroke="#70767e" /></Svg></Marker>
            </RulerRow>
            <PageGrid>
              <Page $top={20}>
                <Approval><b>ЗАТВЕРДЖЕНО</b><b>Рішенням педагогічної ради</b><b>Протокол № _ від 29.08.2025 р.</b></Approval>
                <Author><b>Розроблено</b> ________________________________________</Author>
                <CoverLine $strong>Навчальна програма</CoverLine>
                <CoverLine $strong>«Українська мова. 8 клас»</CoverLine>
                <CoverLine>розроблена на основі МОДЕЛЬНОЇ навчальної програми</CoverLine>
                <CoverLine>«Українська мова. 8 клас»</CoverLine>
                <CoverLine>для закладів загальної середньої освіти</CoverLine>
                <CoverLine>(автори: Заболотний О. В., Заболотний В. В., <Misspelt>Лавринчук</Misspelt> В. П., <Misspelt>Плетньова</Misspelt> К. В., Попова Т. Д.), <i>рекомендованої</i></CoverLine>
                <CoverLine><i>Міністерством освіти і науки України</i> (наказ Міністерства освіти і науки України від 24.07.2023 № 883)</CoverLine>
              </Page>
              <Page $top={20} $side={13}>
                <PageTitle>І. ПОЯСНЮВАЛЬНА ЗАПИСКА</PageTitle>
                <TextBlock text={INTRO} h={179} />
              </Page>
              <Page $top={22} $side={13}>
                <TextBlock text={INTRO2} h={181} />
                <Line $align="left" $indent=">"><DocLink href="#book">https://shkola.in.ua/3276-ukrainska-mova-8-klas-zabolotnyi.html</DocLink></Line>
              </Page>

              <Page $top={20}>
                <PageTitle>ІІ. ОСНОВНА ЧАСТИНА</PageTitle>
                <DocTable>
                  <Cols />
                  <tbody>
                    <tr>{headings.map((c) => <HeadCell key={c}><TextBlock text={c} h={16} rows={3} /></HeadCell>)}</tr>
                    <tr><BandCell colSpan={4}><TextBlock text={"^ВСТУП\n^*Мова як засіб пізнання, впливу та головна ознака національної ідентичності*\n^*(2 год (РМ – 1 год))*"} h={21} rows={4} /></BandCell></tr>
                    <tr>{P4.map((c, i) => <td key={i}><TextBlock text={c} h={138} rows={25} /></td>)}</tr>
                  </tbody>
                </DocTable>
              </Page>
              <Page $top={20}><SimpleTable cells={P5} /></Page>
              <Page $top={20}>
                <DocTable>
                  <Cols />
                  <tbody>
                    <tr><BandCell colSpan={4}><TextBlock text={"^*ПОВТОРЕННЯ ТА УЗАГАЛЬНЕННЯ ВИВЧЕНОГО*\n^*(12 год (РМ – 3, ПР – 1 ))*"} h={16} rows={3} /></BandCell></tr>
                    <tr>
                      <td rowSpan={2}><TextBlock text={P6[0]} h={171} rows={31} /></td>
                      <td rowSpan={2}><TextBlock text={P6[1]} h={171} rows={31} /></td>
                      <td height={118}><TextBlock text={P6[2]} h={117} rows={21} /></td>
                      <td rowSpan={2}><TextBlock text={P6[3]} h={171} rows={31} /></td>
                    </tr>
                    <tr><td height={54} /></tr>
                  </tbody>
                </DocTable>
              </Page>

              <Page $top={20}><SimpleTable cells={P7} /></Page>
              <Page $top={20}><SimpleTable cells={P8} /></Page>
              <Page $top={20}><SimpleTable cells={P9} /></Page>
            </PageGrid>
          </Sheets>
        </Canvas>
        <ScrollRail>
          <SplitHandle />
          <RailBox aria-label="Линейка"><Svg w={12}><path d="M1.500 1.500h4v3h5v6h-4v-3h-5z" fill="#fff" stroke="#555b64" /><path d="M3 3l6 6" stroke="#555b64" strokeDasharray="1 1" /></Svg></RailBox>
          <RailButton aria-label="Вверх"><Svg w={9} h={5}><path d="M0 5h9L4.500 0z" fill="#40454d" /></Svg></RailButton>
          <Thumb><Svg w={8} h={8}><path d="M0 .5h8M0 2.500h8M0 4.500h8M0 6.500h8" stroke="#6f757e" /></Svg></Thumb>
          <RailButton aria-label="Вниз"><Svg w={9} h={5}><path d="M0 0h9L4.500 5z" fill="#40454d" /></Svg></RailButton>
          <RailFoot>
            <RailButton aria-label="Предыдущая страница"><Svg w={7} h={8}><path d="M0 3.500L3.500 0 7 3.500zM0 7.500L3.500 4 7 7.500z" fill="#40454d" /></Svg></RailButton>
            <RailButton aria-label="Объект перехода"><Svg w={8}><circle cx="4" cy="4" r="3" stroke="#555b64" strokeWidth="1.200" /></Svg></RailButton>
            <RailButton aria-label="Следующая страница"><Svg w={7} h={8}><path d="M0 0h7L3.500 3.500zM0 4h7L3.500 7.500z" fill="#40454d" /></Svg></RailButton>
          </RailFoot>
        </ScrollRail>
      </Workspace>

      <StatusBar>
        <StatusItem $w={112}>Страница: 1 из 32</StatusItem>
        <StatusItem $w={111}>Число слов: 7 632</StatusItem>
        <StatusItem $w={113}>
          <Svg w={17} h={16}><path d="M1 9l7-4 8 3-6 6z" fill="#fff" stroke="#3f6cb0" /><path d="M1 9v2l9 4 6-6V8l-6 6z" fill="#4f83cf" /><path d="M8 1l7 8M15 1L9 9" stroke="#e0452c" strokeWidth="2" /></Svg>
          украинский
        </StatusItem>
        <StatusRight>
          <ThinRule />
          <ViewButton $on aria-label="Разметка страницы"><Svg w={12}><path d="M.5.5h11v11H.5z" fill="#fff" stroke="#5a6068" /><path d="M2 3.500h8M2 5.500h8M2 7.500h8M2 9.500h8" stroke="#5a6068" /></Svg></ViewButton>
          <ViewButton aria-label="Режим чтения"><Svg w={12}><path d="M.5 1.500h4l1.500 1 1.500-1h4v8h-4l-1.500 1-1.500-1h-4zM6 2.500v8" fill="#fff" stroke="#4a5058" /><path d="M2 4.500h2.500M2 6.500h2.500M7.500 4.500H10M7.500 6.500H10" stroke="#4a5058" /></Svg></ViewButton>
          <ViewButton aria-label="Веб-документ"><Svg w={13}><path d="M.5.5h9v10h-9z" fill="#fff" stroke="#5a6068" /><path d="M2 3.500h6M2 5.500h4M2 7.500h3" stroke="#5a6068" /><Globe x={9} y={9} r={3.5} /></Svg></ViewButton>
          <ViewButton aria-label="Структура"><Svg w={12}><path d="M1 1.500h7M4 3.500h7M4 5.500h5M4 7.500h7M1 9.500h7" stroke="#6a7078" /></Svg></ViewButton>
          <ViewButton aria-label="Черновик"><Svg w={12}><path d="M1 2.500h10M1 5.500h10M1 8.500h10M1 10.500h10" stroke="#5a6068" strokeWidth="1.200" /></Svg></ViewButton>
          <ZoomLevel>30%</ZoomLevel>
          <IconButton aria-label="Уменьшить"><Svg w={16}><circle cx="8" cy="8" r="7" fill="#eceef1" stroke="#6d737b" /><path d="M4 8h8" stroke="#4a4f57" strokeWidth="2" /></Svg></IconButton>
          <ZoomSlider type="range" min={0} max={100} defaultValue={13} aria-label="Масштаб" />
          <IconButton aria-label="Увеличить"><Svg w={16}><circle cx="8" cy="8" r="7" fill="#eceef1" stroke="#6d737b" /><path d="M4 8h8M8 4v8" stroke="#4a4f57" strokeWidth="2" /></Svg></IconButton>
        </StatusRight>
      </StatusBar>

      <Taskbar>
        <StartButton aria-label="Пуск"><Svg w={16}><path d="M0 2.300L6.500 1.400V7.500H0zM7.500 1.200L16 0v7.500H7.500zM0 8.500h6.500v6.100L0 13.700zM7.500 8.500H16V16l-8.500-1.200z" fill="#fff" /></Svg></StartButton>
        <SearchBox>
          <Svg w={17}><circle cx="10.500" cy="6" r="5" stroke="#222" strokeWidth="1.300" /><path d="M7 10l-6 6" stroke="#222" strokeWidth="1.300" /></Svg>
          <SearchInput placeholder="Поиск" aria-label="Поиск" />
        </SearchBox>
        <AppButton $bg="#a51f22" $line="#ff0d12" aria-label="Opera">
          <Svg w={22} h={24}><ellipse cx="11" cy="12" rx="7.500" ry="8.500" stroke="#e6232c" strokeWidth="5" /><path d="M11 1C4 1 0 7 0 12s4 11 11 11c-5-2-6-7-6-11s1-9 6-11z" fill="#f23a40" /></Svg>
        </AppButton>
        <AppButton $line="#76b9ed" aria-label="Viber">
          <Svg w={23} h={24}><path d="M11.500 1C4 1 1.500 4 1.500 10.500c0 5 1.500 7.500 5 8.500v4l4-3.500c8 .3 11-2 11-9C21.500 3.500 18 1 11.500 1z" fill="#7360f2" stroke="#fff" strokeWidth="1.400" /><path d="M7 6l2-1 2 3-1 1.500c.5 2 2 3.200 3.500 3.700L15 12l2.500 1.800-1 2.200C12 18 5.500 10 7 6z" fill="#fff" /><path d="M12.500 5.500c3 .3 4.500 2 4.500 4.500M12.700 7.500c1.500.2 2.300 1 2.300 2.500" stroke="#fff" /></Svg>
        </AppButton>
        <AppButton $line="#76b9ed" aria-label="Проводник">
          <Svg w={22} h={20}><path d="M1 1h8l2 3h10v14H1z" fill="#e8a92c" /><path d="M1 5h20v13H1z" fill="#fbd667" /><path d="M4.500 19v-8h13v8h-3.500v-4h-6v4z" fill="#3f93d2" /></Svg>
        </AppButton>
        <AppButton $line="#76b9ed" aria-label="Word"><WordIcon s={22} /></AppButton>
        <Tray>
          <TrayGlyph><Svg w={12} h={16}><path d="M1 11l5-5 5 5" stroke="#fff" strokeWidth="1.300" /></Svg></TrayGlyph>
          <TrayGlyph><Svg w={14} h={18}><path d="M1.500 3.500h8v7h-8zM9.500 5h3v4h-3M2 14.500h8" stroke="#fff" /></Svg></TrayGlyph>
          <Svg w={18} h={16}><path d="M4.500 4.500h11v7h-11z" stroke="#fff" /><path d="M6 6h8v4H6z" fill="#fff" /><path d="M16 6.500h1.500v3H16M1 4v4l2 2v2" stroke="#fff" /></Svg>
          <Svg w={16}><path d="M2 14A12 12 0 0 1 14 2M5 14a9 9 0 0 1 9-9M8 14a6 6 0 0 1 6-6" stroke="#ddd" /><circle cx="12.500" cy="13" r="1.800" fill="#fff" /></Svg>
          <Svg w={18} h={16}><path d="M1.500 6h3l4-4v12l-4-4h-3z" stroke="#fff" /><path d="M11 5c1.500 2 1.500 4 0 6M13 3c2.500 3 2.500 7 0 10" stroke="#ccc" /></Svg>
          <TrayText>УКР</TrayText>
          <TrayDate>25.08.2025</TrayDate>
          <Svg w={26} h={26}><path d="M2 4h17v11h-8l-4 4v-4H2z" fill="#fff" /><circle cx="17" cy="17" r="7.500" fill="#3a3633" stroke="#aaa" /><path d="M15 15l2.500-2v8" stroke="#fff" strokeWidth="1.300" /></Svg>
        </Tray>
      </Taskbar>

      <Tooltip role="tooltip">Выбор масштаба. Щелкните, чтобы открыть диалоговое окно "Масштаб".</Tooltip>
    </Shell>
  );
}
